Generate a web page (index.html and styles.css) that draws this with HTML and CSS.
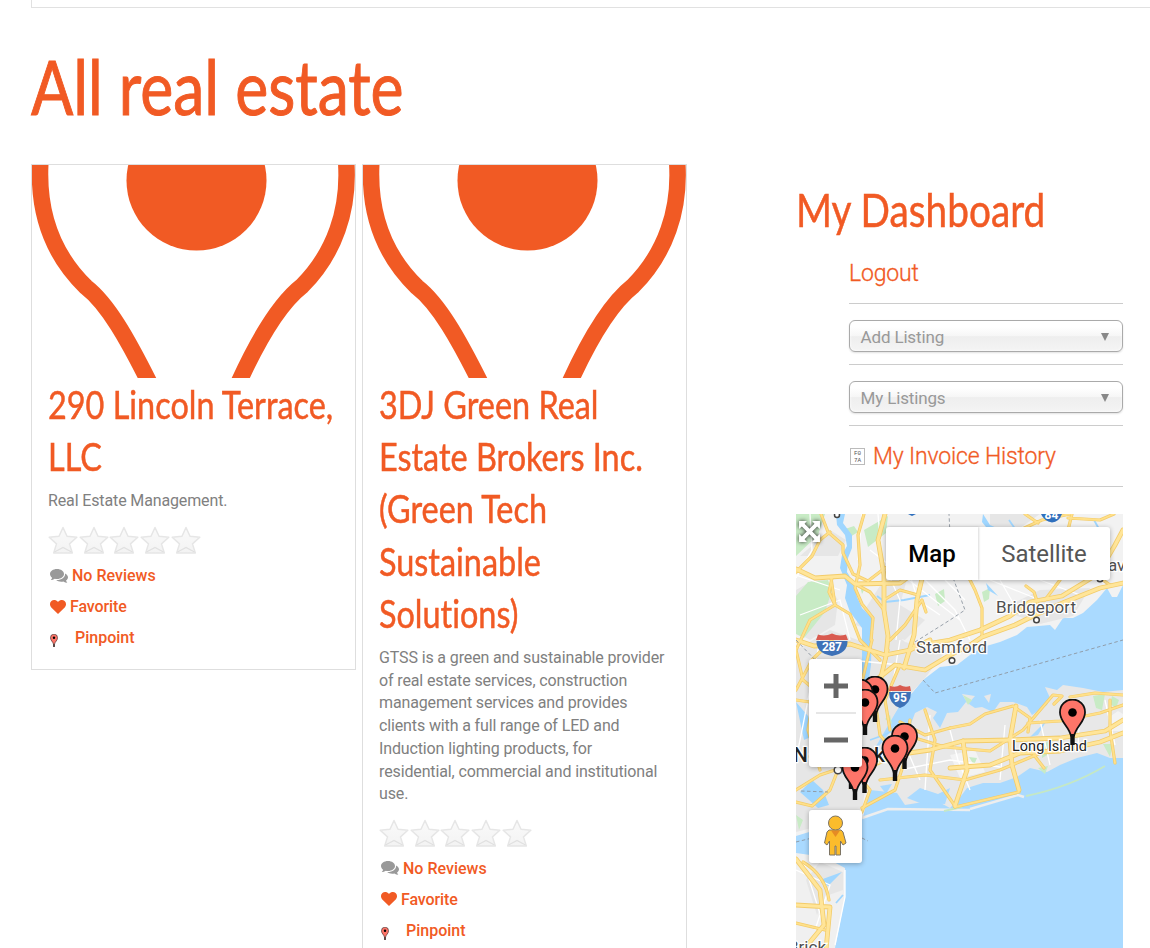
FILE: index.html
```html
<!DOCTYPE html>
<html lang="en">
<head>
<meta charset="utf-8">
<title>All real estate</title>
<link rel="stylesheet" href="styles.css">
</head>
<body>
<svg class="defs" width="0" height="0" aria-hidden="true">
  <defs>
    <linearGradient id="starfill" x1="0" y1="0" x2="0" y2="1"><stop offset="0" stop-color="#fafafa"/><stop offset="1" stop-color="#f3f3f3"/></linearGradient>
    <symbol id="star" viewBox="0 0 30 28"><path d="M15 1.500l4 8.700 9.800 1.100-7.300 6.600 2.800 9.100H5.700l2.800-9.100-7.300-6.600 9.800-1.100z" fill="url(#starfill)" stroke="#e6e6e6" stroke-width="1.500" stroke-linejoin="round"/><path d="M6.500 26l8.500-4.500 8.500 4.500" fill="none" stroke="#e0e0e0" stroke-width="1.200"/></symbol>
    <symbol id="chat" viewBox="0 0 18 14"><path d="M7 0c4 0 7 2.200 7 5s-3 5-7 5c-.8 0-1.500-.1-2.200-.3C3.600 10.600 2.200 11 .7 11c.8-.8 1.200-1.500 1.400-2.300C.8 7.800 0 6.500 0 5 0 2.200 3 0 7 0z" fill="#999"/><path d="M15.100 4.500c1.800.9 2.900 2.200 2.900 3.800 0 1.300-.8 2.500-2 3.300.2.800.6 1.400 1.300 2.200-1.500-.1-2.800-.5-3.900-1.300-.7.2-1.400.2-2.100.2-2.100 0-3.900-.7-5.100-1.700 5 .2 9.200-2.500 8.900-6.500z" fill="#999"/></symbol>
    <symbol id="heart" viewBox="0 0 16 14"><path d="M8 14L1.300 7.500C-.6 5.500-.3 2.500 1.400 1 3.200-.5 6-.3 8 2c2-2.300 4.800-2.500 6.600-1 1.700 1.500 2 4.500.1 6.500z" fill="#f15a24"/></symbol>
    <symbol id="pin" viewBox="-14 -45 28 46"><path d="M-1.300 0V-7C-3-18-13-22-12.500-32A12.500 12.500 0 0 1 12.500-32C13-22 3-18 1.300-7V0z" fill="#fe7569" stroke="#111" stroke-width="1.800"/><path d="M0-10V1" stroke="#111" stroke-width="3"/><circle cy="-31.500" r="4.300"/></symbol>
    <symbol id="brand" viewBox="32 165 323 213"><circle cx="196.500" cy="180.500" r="70" fill="#f15a24"/><path d="M40.500 160C37 212 52 254 86 287C108 304 128 340 150 384" fill="none" stroke="#f15a24" stroke-width="16.500"/><path d="M346 160C350 210 334 254 302 286C279 304 257 342 238 384" fill="none" stroke="#f15a24" stroke-width="16.500"/></symbol>
    <g id="trunk">
      <path d="M796 569L815 578 845 576 855 584 900 583 918 570 960 560"/>
      <path d="M885 514L878 540 884 575 884 610 888 636 886 656 878 690"/>
      <path d="M924 570L917 600 914 635 904 668"/>
      <path d="M796 640L814 646 850 644 885 655 910 650 930 640"/>
      <path d="M876 680L895 665 925 670 950 655 970 645 982 637 1015 625 1035 615 1065 602 1100 588 1123 583"/>
      <path d="M914 646L950 640 980 630 1010 616 1030 602 1062 596 1098 574 1115 545 1123 530"/>
      <path d="M862 770L895 755 930 750 963 741 1010 740 1060 738 1105 731 1123 720"/>
      <path d="M796 859L820 890 824 925 805 948M796 905L830 907 826 950"/>
      <path d="M950 768L990 765 1020 753 1060 751 1100 742 1123 733M963 741L967 770 955 806M1016 706L1010 740 1012 765 1019 790"/>
    </g>
    <g id="roads">
      <path d="M821 514L828 532 843 545 843 553 853 574 868 581M830 532L820 540 812 556 796 572"/>
      <path d="M831 578L835 605 850 614 860 640 880 660M832 578L829 592 835 605"/>
      <path d="M864 514L858 535 860 565 855 588 862 604 873 618 871 640"/>
      <path d="M868 581L885 568 905 560M855 584L870 592 884 610M884 600L900 590 918 595M890 640L905 625 922 600 926 612"/>
      <path d="M965 570L975 590 982 608 982 635M1026 586L1034 592 1038 604M1045 600L1060 580 1062 560M1096 575L1110 585"/>
      <path d="M1020 530L1042 520 1070 514M1025 514L1038 523M1072 514L1068 530M1068 518L1100 520 1114 514"/>
      <path d="M796 650L803 680 815 690 808 730 820 770M796 700L830 705M796 690L812 660 832 640M835 605L810 620 796 650"/>
      <path d="M872 640L860 690 855 730 842 760 830 790 812 806 796 802M888 650L875 700 880 735 900 760M900 665L885 700 890 730"/>
      <path d="M796 790L820 775 850 765 870 790 862 812"/>
      <path d="M950 728L970 724 985 714 1013 706 1030 718 1028 732"/>
      <path d="M905 735L945 747 990 751 1023 730 1053 695 1062 696 1054 704M910 720L905 760 895 790 862 808"/>
      <path d="M880 780L925 775 965 780 1000 770 1060 745M925 710L935 740 930 770 955 806M900 722L925 735 950 728"/>
      <path d="M1123 695L1095 693 1070 697M1028 723L1060 721 1100 713 1123 705M1110 700V730L1115 763M1034 755L1044 768M955 807L985 800 1019 792"/>
      <path d="M803 862Q825 875 829 900M796 923L825 930"/>
    </g>
  </defs>
</svg>

<div class="banner"></div>
<main class="page">
  <h1 class="display page-title">All real estate</h1>
  <div class="columns">
    <section class="listings">
      <article class="card">
        <svg class="brand"><use href="#brand"/></svg>
        <div class="card-body">
          <h3 class="display card-title">290 Lincoln Terrace,<br>LLC</h3>
          <p class="desc">Real Estate Management.</p>
          <div class="stars"><svg><use href="#star"/></svg><svg><use href="#star"/></svg><svg><use href="#star"/></svg><svg><use href="#star"/></svg><svg><use href="#star"/></svg></div>
          <ul class="meta">
            <li><svg class="i-chat"><use href="#chat"/></svg><a>No Reviews</a></li>
            <li><svg class="i-heart"><use href="#heart"/></svg><a>Favorite</a></li>
            <li><svg class="i-pin"><use href="#pin"/></svg><a>Pinpoint</a></li>
          </ul>
        </div>
      </article>
      <article class="card">
        <svg class="brand"><use href="#brand"/></svg>
        <div class="card-body">
          <h3 class="display card-title">3DJ Green Real<br>Estate Brokers Inc.<br>(Green Tech<br>Sustainable<br>Solutions)</h3>
          <p class="desc">GTSS is a green and sustainable provider<br>of real estate services, construction<br>management services and provides<br>clients with a full range of LED and<br>Induction lighting products, for<br>residential, commercial and institutional<br>use.</p>
          <div class="stars"><svg><use href="#star"/></svg><svg><use href="#star"/></svg><svg><use href="#star"/></svg><svg><use href="#star"/></svg><svg><use href="#star"/></svg></div>
          <ul class="meta">
            <li><svg class="i-chat"><use href="#chat"/></svg><a>No Reviews</a></li>
            <li><svg class="i-heart"><use href="#heart"/></svg><a>Favorite</a></li>
            <li><svg class="i-pin"><use href="#pin"/></svg><a>Pinpoint</a></li>
          </ul>
        </div>
      </article>
    </section>

    <aside class="sidebar">
      <h2 class="display side-title">My Dashboard</h2>
      <ul class="menu">
        <li><a>Logout</a></li>
        <li><div class="select"><span>Add Listing</span><i></i></div></li>
        <li><div class="select"><span>My Listings</span><i></i></div></li>
        <li><span class="hexbox"><b>F0</b><b>7A</b></span><a class="invoice">My Invoice History</a></li>
      </ul>
      <div class="map">
        <svg class="map-art" viewBox="796 514 327 434">
          <rect x="796" y="514" width="327" height="434" fill="#aadaff"/>
          <!-- mainland -->
          <path fill="#f2f2f2" d="M796 514H1123V585L1117 597H1112L1107 588 1097 600 1083 613 1073 618H1063L1055 630 1050 625 1027 627 1017 635 1000 642 983 647 970 655 957 665 940 667 923 680 913 692 900 705 890 720 878 738 868 760 860 770 872 775 863 818 842 822 796 836z"/>
          <path fill="#e6e6e6" d="M796 650L830 630 858 640 885 625 905 642 945 652 925 678 900 705 868 760 862 815 796 832zM796 590L822 575 838 600 835 625 810 640 796 632zM855 625L890 570 912 560 900 605 925 620 905 640zM1000 610L1040 590 1090 588 1073 616 1040 624zM830 530L846 540 838 556 800 556zM990 514L1040 514 1020 528H990z"/>
          <!-- Long Island -->
          <path fill="#e8e8e8" d="M870 790L866 762 892 730 908 732 915 713 927 707 937 712 933 718 940 728 947 713 958 712 966 702 975 708 982 707 993 712 1000 702 1013 702 1027 707 1032 715 1047 705 1050 698 1045 687 1057 690 1063 685 1083 688 1103 692 1123 690V758H1110L1097 753 1077 758 1060 765 1047 772 1030 768 1017 777 1000 783H983L967 788 958 800 950 808 935 800 905 805 897 793z"/>
          <path fill="#e8e8e8" d="M984 696L991 694 989 703zM962 694L975 696 968 704zM875 752L885 745 893 748 883 757z"/>
          <path fill="#f3f3f3" d="M1108 718L1118 711 1123 714V731H1110zM950 755L975 750 985 772 960 778z"/>
          <path fill="#aadaff" d="M907 798L920 788 938 794 950 788 945 804 920 803zM880 786L892 784 886 794zM1030 737L1047 720 1038 735z"/>
          <path fill="none" stroke="#eee" stroke-width="2.500" d="M862 818L888 809 970 810M970 809L1018 795 1024 797"/>
          <path fill="none" stroke="#c5e8c5" stroke-width="1.800" d="M1026 796Q1070 787 1105 766M944 811L962 807"/>
          <!-- Jersey shore -->
          <path fill="#f0f0f0" d="M796 853L810 855 830 860 845 868 845 897 840 923 835 948H796z"/>
          <path fill="#e6e6e6" d="M820 862L843 872V890L826 896 817 915 806 880z"/>
          <!-- parks -->
          <path fill="#c8ebc5" d="M796 514H825L818 535 796 556zM796 596L808 582 828 580 832 590 825 612 804 638 796 634zM845 529L854 526 858 532 850 537zM864 530L888 516 886 533 868 547zM935 594L944 589 945 601 938 606zM982 592L990 588 989 599 984 602zM1062 534L1067 538 1065 546 1060 540zM963 695L972 700 968 705zM885 719L890 715 892 724zM1093 696L1105 694 1102 710 1096 708zM1112 696L1119 700 1116 708 1110 704zM1103 744L1113 744 1110 757zM1038 768L1048 766 1045 774zM1042 745L1050 740 1049 754 1042 758zM969 757L977 758 974 765zM860 585L865 588 862 594zM796 815L803 820 799 830z"/>
          <!-- rivers -->
          <path fill="#9fd6ff" d="M836 514H845L843 523 852 535 852 548 848 558 847 572 855 585 857 597 862 608 872 618 871 665 866 700 850 750 842 775 840 768 850 735 862 690 862 628 850 612 845 598 847 585 840 568 842 555 847 546 845 535 837 525z"/>
          <path fill="#9fd6ff" d="M983 514L990 525 999 529 990 532 982 522zM986 583L998 596 988 590zM796 702L808 716 815 735 804 740zM812 780L823 790 829 805 818 808 800 792zM820 880L842 872 828 886z"/>
          <path fill="none" stroke="#9fd6ff" stroke-width="1.800" d="M877 596L885 602 904 600 930 595M1009 520L1018 533M1094 520L1099 529M843 895L836 903M870 740L884 735 898 728"/>
          <!-- minor roads -->
          <path fill="none" stroke="#fff" stroke-width="1.300" d="M796 575L840 590M810 514L812 550 796 578M862 514L858 560M878 514L882 560 900 600 896 640M905 560L918 600 940 615M925 580L955 610 970 640M945 580L965 600M1000 580L1020 615M1040 580L1080 595M1100 580L1105 585M800 615L840 600 850 640M820 640L808 700 798 750M900 640L890 700M905 745L920 780M950 730L958 760 970 790M1005 725L1000 780M1040 720L1050 765M1080 700L1078 750M1105 700L1115 745M796 870L830 885 815 930M803 860L822 920M845 870V897L835 945M870 550L960 620M990 580L1040 600M850 660L900 665M900 770L950 760 1000 767M930 715L925 790"/>
          <!-- highways -->
          <use href="#roads" class="road road-casing"/>
          <use href="#trunk" class="road trunk-casing"/>
          <use href="#roads" class="road road-inner"/>
          <use href="#trunk" class="road trunk-inner"/>
          <g fill="none" stroke="#8d96a0" stroke-width=".9" stroke-dasharray="3.500 2.500"><path d="M923 680L935 693 1123 640M915 642L950 620 965 610 952 575 949 514M796 640L820 665M796 842L812 838M862 838L868 841M801 791L828 792"/></g>
          <g class="label"><text x="996" y="612.500" textLength="80">Bridgeport</text><text x="916" y="653" textLength="71">Stamford</text><text x="1108" y="571">aven</text><text class="dark" x="1012" y="750.500" textLength="75">Long Island</text><text class="big" x="793" y="762" textLength="92">New York</text><text x="788" y="953">Brick</text></g>
          <g fill="#fff" stroke="#444" stroke-width="1.500"><circle cx="1036.500" cy="620" r="2.800"/><circle cx="952" cy="660.500" r="2.800"/><circle cx="838" cy="770" r="3.800"/><circle cx="837" cy="515" r="2.500"/><circle cx="1100" cy="579" r="2.800"/></g>
          <g class="shield">
            <path d="M816.500 641H847.500Q848 653 832 656Q816 653 816.500 641z" fill="#3e72b8"/><path d="M818 634.500Q825 637 832 633.500Q839 637 846 634.500L848 640H816z" fill="#d95b50"/><text x="832" y="650.500" textLength="20">287</text>
            <path d="M889 692H911Q911 704 900 708Q889 704 889 692z" fill="#3e72b8"/><path d="M890 686Q896 688 900 685Q905 688 910 686L911 691H889z" fill="#d95b50"/><text x="900" y="702">95</text>
            <path d="M1041 514H1062Q1059 522 1052 522.500Q1044 521 1041 514z" fill="#2f6fbd"/><text x="1051.500" y="519">84</text><path d="M908 514H916L912 516z" fill="#2f6fbd"/>
          </g>
          <g>
            <use href="#pin" x="861" y="676" width="28" height="46"/><use href="#pin" x="846" y="679" width="28" height="46"/><use href="#pin" x="851" y="689" width="28" height="46"/>
            <use href="#pin" x="890.500" y="723" width="28" height="46"/><use href="#pin" x="881" y="735" width="28" height="46"/>
            <use href="#pin" x="837" y="743" width="28" height="46"/><use href="#pin" x="850.500" y="747" width="28" height="46"/><use href="#pin" x="841" y="754" width="28" height="46"/>
            <use href="#pin" x="1058.500" y="699" width="28" height="46"/>
          </g>
        </svg>
        <svg class="expand" viewBox="0 0 22 22"><path d="M1 1h7.500L6.300 3.700 11 8.400l4.700-4.700L13.500 1H21v7.500l-2.700-2.200L13.600 11l4.700 4.700 2.700-2.200V21h-7.500l2.200-2.700L11 13.600l-4.700 4.700L8.500 21H1v-7.500l2.700 2.200L8.400 11 3.700 6.300 1 8.500z" fill="#fff"/></svg>
        <div class="types"><span class="active">Map</span><span>Satellite</span></div>
        <div class="zoom"><svg viewBox="0 0 53 108"><path d="M15 27H39M27 15V39M15 81H39" stroke="#666" stroke-width="5"/><path d="M7 54H47" stroke="#e6e6e6" stroke-width="2"/></svg></div>
        <div class="street"><svg viewBox="0 0 53 53"><g fill="#fbbc2c" stroke="#7d7463" stroke-width="1"><path d="M20 20H32L34 22 37 33 34 35 31.500 31V45H27V36H26V45H20.500V31L18 35 15.500 33 18 22z"/><circle cx="26.500" cy="13" r="7"/></g><path d="M22 20.500H31L26.500 27z" fill="#e58b24"/></svg></div>
      </div>
    </aside>
  </div>
</main>
</body>
</html>
```
FILE: styles.css
```css
* { box-sizing: border-box; }
html { overflow: hidden; }
body { margin: 0; height: 948px; overflow: hidden; background: #fff; font-family: Roboto, "Liberation Sans", sans-serif; color: #808080; }
h1, h2, h3, p, ul { margin: 0; padding: 0; }
ul { list-style: none; }
svg { display: block; }
.defs { position: absolute; }
.banner { height: 8px; margin-left: 31px; border-left: 1px solid #e1e1e1; border-bottom: 1px solid #e1e1e1; }
.page { padding-left: 31px; }
.display { font-family: Lato, sans-serif; font-weight: 400; font-variant-ligatures: none; color: #f15a24; white-space: nowrap; transform-origin: 0 50%; -webkit-text-stroke: .5px #f15a24; stroke-linejoin: round; }
.page-title { width: 500px; padding-top: 28px; height: 156px; font-size: 76px; line-height: 100px; transform: scaleX(.823); -webkit-text-stroke-width: 1px; }
.columns { display: flex; align-items: flex-start; }
.listings { display: flex; align-items: flex-start; gap: 6px; width: 656px; margin-right: 109px; }
.card { width: 325px; flex: none; border: 1px solid #dedede; padding-bottom: 16px; }
.brand { width: 323px; height: 213px; }
.card-body { padding: 0 0 0 16px; }
.card-title { width: 300px; font-size: 39px; line-height: 52.2px; transform: scaleX(.831); }
.desc { margin-top: 8px; font-size: 16px; line-height: 22.7px; letter-spacing: -.13px; white-space: nowrap; }
.stars { display: flex; margin-top: 13px; gap: .7px; }
.stars svg { width: 30px; height: 28px; }
.meta { margin-top: 6px; padding-left: 2px; font-size: 16px; font-weight: 500; color: #f15a24; }
.meta li { display: flex; align-items: center; height: 31px; }
.i-chat { width: 18px; height: 14px; margin-right: 4px; }
.i-heart { width: 16px; height: 14px; margin: 0 4px 0 0; }
.i-pin { width: 8px; height: 13px; margin: 6px 17px 0 0; }
.i-heart + a { letter-spacing: -.1px; }
.sidebar { width: 327px; flex: none; padding-top: 14px; }
.side-title { width: 400px; height: 66px; font-size: 47px; line-height: 63px; transform: scaleX(.825); }
.menu { margin-left: 53px; }
.menu li { height: 61px; border-bottom: 1px solid #ccc; display: flex; align-items: center; font-size: 23px; font-weight: 300; letter-spacing: -.15px; color: #f15a24; }
.menu li > a { -webkit-text-stroke: .3px #f15a24; }
.menu li:first-child { height: 60px; }
.select { width: 100%; height: 32px; margin-top: 3px; padding: 2px 13px 0 10.5px; display: flex; align-items: center; justify-content: space-between; border: 1px solid #aaa; border-radius: 6px; background: linear-gradient(#fff 20%, #f6f6f6 50%, #eee 52%, #f4f4f4 100%); box-shadow: 0 1px 2px rgba(0,0,0,.12), inset 0 0 3px #fff; color: #999; font-size: 17px; font-weight: 400; }
.select i { border: 4.5px solid transparent; border-top: 8px solid #888; border-bottom: 0; }
.hexbox { width: 15px; height: 17px; margin: 0 8px 0 1px; padding-top: 1px; border: 1px solid #bbb; font: 6px/7px "Liberation Mono", monospace; letter-spacing: 0; color: #555; text-align: center; }
.hexbox b { display: block; font-weight: 400; }
.map { position: relative; height: 434px; margin-top: 27px; overflow: hidden; }
.map-art { width: 327px; height: 434px; }
.road { fill: none; stroke-linejoin: round; stroke-linecap: round; }
.road-casing { stroke: #f3cc6a; stroke-width: 3.2px; }
.road-inner { stroke: #ffe08a; stroke-width: 1.8px; }
.trunk-casing { stroke: #f3cc6a; stroke-width: 4.8px; }
.trunk-inner { stroke: #ffe599; stroke-width: 3.2px; }
.label { font-family: Roboto, sans-serif; font-size: 17px; fill: #505050; stroke: #fff; stroke-width: 2.5px; paint-order: stroke; }
.label .dark { font-size: 14.5px; fill: #222; }
.label .big { font-size: 21px; font-weight: 500; fill: #222; }
.shield { font: 700 12px Roboto, sans-serif; text-anchor: middle; }
.shield text { fill: #fff; }
.expand { position: absolute; left: 2px; top: 6px; width: 23px; height: 23px; filter: drop-shadow(0 0 2px #222); }
.types { position: absolute; left: 90px; top: 13px; display: flex; height: 53px; border-radius: 3px; background: #fff; box-shadow: 0 1px 5px rgba(0,0,0,.3); font-size: 24px; line-height: 54px; color: #565656; text-align: center; letter-spacing: -.05px; }
.types span { width: 132px; }
.types .active { width: 92px; font-weight: 500; color: #000; box-shadow: 1px 0 2px rgba(0,0,0,.15); }
.zoom, .street { position: absolute; left: 13px; width: 53px; background: #fff; border-radius: 3px; box-shadow: 0 1px 5px rgba(0,0,0,.3); }
.zoom { top: 145px; height: 108px; }
.street { top: 296px; height: 53px; }
```
